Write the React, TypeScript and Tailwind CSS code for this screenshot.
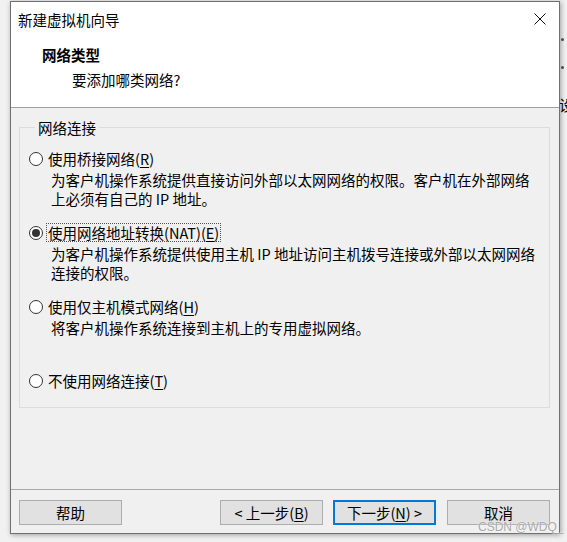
import React from "react";

interface OptionProps {
  label: React.ReactNode;
  desc?: string[];
  checked?: boolean;
  focused?: boolean;
  last?: boolean;
}

function Key({ k }: { k: string }) {
  return <span className="underline decoration-1 underline-offset-[2px]">{k}</span>;
}

function Radio({ checked }: { checked?: boolean }) {
  return (
    <span className="flex h-[14px] w-[14px] shrink-0 items-center justify-center rounded-full border border-[#333333] bg-white">
      {checked && <span className="h-[8px] w-[8px] rounded-full bg-[#333333]" />}
    </span>
  );
}

function Option({ label, desc = [], checked, focused, last }: OptionProps) {
  return (
    <div className={last ? "" : "h-[74px]"}>
      <div className="flex h-[19px] items-center">
        <Radio checked={checked} />
        <span
          className={
            "ml-[3px] px-[1px] leading-[17px] border " +
            (focused ? "border-dotted border-[#555555]" : "border-transparent")
          }
        >
          {label}
        </span>
      </div>
      <div className="mt-[2px] pl-[22px] leading-[19px]">
        {desc.map((d) => (
          <div key={d}>{d}</div>
        ))}
      </div>
    </div>
  );
}

function Button({ children, primary }: { children: React.ReactNode; primary?: boolean }) {
  return (
    <button
      className={
        "flex h-[25px] w-[103px] items-center justify-center bg-[#e1e1e1] text-[14.5px] leading-[19px] " +
        (primary ? "border-2 border-[#0078d7]" : "border border-[#adadad]")
      }
    >
      {children}
    </button>
  );
}

export default function App() {
  return (
    <div className="relative h-[542px] w-[567px] overflow-hidden bg-[#f1f1f1] font-['Noto_Sans_CJK_SC',sans-serif] text-[14.5px] text-black">
      {/* 뒤쪽 창 조각 */}
      <span className="absolute left-[561px] top-[38px] h-[3px] w-[3px] rounded-full bg-[#555555]" />
      <span className="absolute left-[561px] top-[66px] h-[3px] w-[3px] rounded-full bg-[#555555]" />
      <span className="absolute left-[559px] top-[95px] text-[15px] leading-[19px]">设</span>

      <div className="relative ml-[10px] mt-[1px] flex h-[533px] w-[550px] flex-col border border-[#707070] bg-[#f0f0f0] shadow-[1px_1px_5px_rgba(0,0,0,0.35)]">
        {/* header */}
        <div className="h-[106px] shrink-0 border-b border-[#a0a0a0] bg-white">
          <div className="flex h-[34px] items-center justify-between pl-[7px] pr-[13px]">
            <span className="leading-[19px]">新建虚拟机向导</span>
            <svg width="12" height="12" viewBox="0 0 12 12">
              <path d="M0.5 0.5 L11.5 11.5 M11.5 0.5 L0.5 11.5" stroke="#111" strokeWidth="1" fill="none" />
            </svg>
          </div>
          <div className="mt-[9px] pl-[31px] font-bold leading-[19px]">网络类型</div>
          <div className="mt-[6px] pl-[61px] leading-[19px]">要添加哪类网络?</div>
        </div>

        {/* body */}
        <div className="flex-1">
          <fieldset className="ml-[8px] mr-[9px] mt-[10px] border border-[#dcdcdc] pb-[15px] pl-[9px] pt-[12px]">
            <legend className="ml-[6px] px-[3px] leading-[19px]">网络连接</legend>
            <Option
              label={
                <>
                  使用桥接网络(<Key k="R" />)
                </>
              }
              desc={["为客户机操作系统提供直接访问外部以太网网络的权限。客户机在外部网络", "上必须有自己的 IP 地址。"]}
            />
            <Option
              checked
              focused
              label={
                <>
                  使用网络地址转换(NAT)(<Key k="E" />)
                </>
              }
              desc={["为客户机操作系统提供使用主机 IP 地址访问主机拨号连接或外部以太网网络", "连接的权限。"]}
            />
            <Option
              label={
                <>
                  使用仅主机模式网络(<Key k="H" />)
                </>
              }
              desc={["将客户机操作系统连接到主机上的专用虚拟网络。"]}
            />
            <Option
              last
              label={
                <>
                  不使用网络连接(<Key k="T" />)
                </>
              }
            />
          </fieldset>
        </div>

        {/* footer */}
        <div className="flex h-[44px] shrink-0 border-t border-[#a9a9a9] pb-[8px] pl-[8px] pr-[9px] pt-[10px]">
          <Button>帮助</Button>
          <div className="flex-1" />
          <Button>
            &lt; 上一步(<Key k="B" />)
          </Button>
          <div className="ml-[10px]">
            <Button primary>
              下一步(<Key k="N" />) &gt;
            </Button>
          </div>
          <div className="ml-[11px]">
            <Button>取消</Button>
          </div>
        </div>
      </div>

      <span className="absolute left-[478px] top-[519px] font-['Liberation_Sans',sans-serif] text-[12px] leading-[16px] text-[#a9a9a9] [text-shadow:0_0_2px_#ffffff]">
        CSDN @WDQ_
      </span>
    </div>
  );
}
